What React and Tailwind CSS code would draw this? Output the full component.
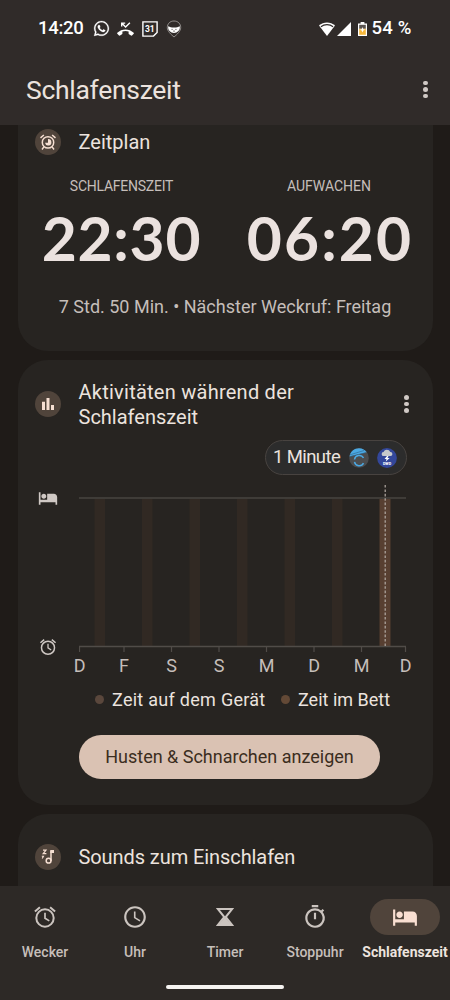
import { MdHotel, MdSchedule, MdOutlineTimer } from 'react-icons/md';
import { FaWhatsapp } from 'react-icons/fa';

function AlarmIcon({ className }) {
  return (
    <svg viewBox="0 0 24 24" className={className} fill="none" stroke="currentColor" strokeWidth="2">
      <circle cx="12" cy="13" r="8.700" />
      <path d="m1.900 6.400 5-4.200M22.100 6.400l-5-4.200" />
      <path d="M12 7.800v5.400l4.300 2.700" strokeWidth="1.700" />
    </svg>
  );
}

function Dots({ className }) {
  return (
    <div className={`flex flex-col items-center gap-[2px] ${className}`}>
      <i className="size-[4.600px] rounded-full bg-[#d0c9c5]" />
      <i className="size-[4.600px] rounded-full bg-[#d0c9c5]" />
      <i className="size-[4.600px] rounded-full bg-[#d0c9c5]" />
    </div>
  );
}

function Badge({ children }) {
  return (
    <span className="flex size-[26px] shrink-0 items-center justify-center rounded-full bg-[#50443b] text-[#f6dfd2]">
      {children}
    </span>
  );
}

function StatusBar() {
  return (
    <div className="flex h-14 items-center pt-px pl-[38px] pr-[38px] text-white">
      <span className="w-[55px] text-[18.500px] font-medium tracking-[-0.300px]">14:20</span>
      <FaWhatsapp className="size-[17px]" stroke="currentColor" strokeWidth="8" />
      <svg viewBox="0 0 17 14" className="ml-[7px] h-[14px] w-[17px]">
        <path d="M.3 10.800C4.800 6.300 12.200 6.300 16.700 10.800c.3.300.3.600 0 .9l-1.700 1.800c-.3.300-.7.300-1 .1l-2-1.400c-.3-.2-.4-.5-.4-.8V9.600c-2-.7-4.200-.7-6.200 0v1.800c0 .3-.1.600-.4.800l-2 1.400c-.3.200-.7.200-1-.1L.3 11.700c-.3-.3-.3-.6 0-.9z" fill="white" />
        <path d="M4.700 4.600V1.100h3.500M4.900 1.300 8.600 5l4.300-4.200" fill="none" stroke="white" strokeWidth="1.400" />
      </svg>
      <svg viewBox="0 0 16 16" className="ml-[8px] size-4" fill="none" stroke="white" strokeWidth="1.400">
        <path d="M.9 .9h14.200v10.500l-3.600 3.700H.9z" />
        <text x="7.800" y="11" fontSize="8.500" fontWeight="700" textAnchor="middle" fill="white" stroke="none">31</text>
      </svg>
      <svg viewBox="0 0 16 18" className="ml-2 h-[18px] w-4" fill="none">
        <path d="M8 1C4 1 1.300 3.800 1.300 7.500S5 14.500 8 17c3-2.500 6.700-5.800 6.700-9.500S12 1 8 1z" stroke="#aaa6a3" strokeWidth=".8" />
        <path d="M2.200 6.200c1.800.6 3 1.400 5.800 1.400s4-.8 5.800-1.400c.7 3.800-2.400 6.700-5.800 6.700S1.500 10 2.200 6.200z" fill="white" />
        <path d="M5.400 9.400h1.400M9.200 9.400h1.400M7 11.100h2" stroke="#504b48" strokeWidth=".7" />
      </svg>
      <svg viewBox="0 0 16 14" className="ml-auto h-[14px] w-4">
        <path d="M8 14 0 3.600C4.500-.7 11.500-.7 16 3.600z" fill="white" />
        <path d="M1.900 4.700c3.600-2.800 8.600-2.800 12.200 0" stroke="#302b29" strokeWidth="1.100" fill="none" />
      </svg>
      <svg viewBox="0 0 14 14" className="ml-[1.500px] size-[14px]">
        <path d="M14 0v14H0z" fill="white" />
      </svg>
      <svg viewBox="0 0 9 14" className="ml-[7px] h-[14px] w-[9px]">
        <path d="M2.600 0h3.800v1.400H9V14H0V1.400h2.600z" fill="white" />
        <path d="M1.200 2.800h6.600v4H1.200z" fill="#5a5450" />
        <path d="M1.200 6.800h6.600v6H1.200z" fill="#f5b63a" />
        <path d="M4.500 5 5.300 7.200l2 .6-2 .7-.8 2-.8-2-2-.7 2-.6z" fill="white" />
      </svg>
      <span className="ml-[5px] w-[40.500px] whitespace-nowrap text-[18.500px] font-medium tracking-[0.200px]">54 %</span>
    </div>
  );
}

function ScheduleCard() {
  return (
    <section className="mx-[17.500px] h-[226px] shrink-0 rounded-b-[30px] bg-[#272421]">
      <div className="flex h-[33px] items-center pl-[17.500px]">
        <Badge>
          <svg viewBox="0 0 24 24" className="size-[18px]" fill="none" stroke="currentColor" strokeWidth="2">
            <circle cx="12" cy="12.500" r="7.600" />
            <path d="m2 6.500 4.500-3.800M22 6.500l-4.500-3.800M6.500 18.500 4 22M17.500 18.500 20 22" />
            <path d="M12 8v5H8a4.300 4.300 0 1 0 4-5z" fill="currentColor" stroke="none" />
          </svg>
        </Badge>
        <h2 className="ml-[17.500px] text-[20px] text-[#ece3de]">Zeitplan</h2>
      </div>
      <div className="mt-[18.500px] flex h-5 items-center text-[14px] text-[#c5beba]">
        <span className="w-[208px] text-center tracking-[-0.250px]">SCHLAFENSZEIT</span>
        <span className="w-[207px] text-center">AUFWACHEN</span>
      </div>
      <div className="mt-[11.500px] flex h-[60px] font-['Lato',sans-serif] text-[60.500px] leading-none font-bold text-[#ebe2df]">
        <span className="w-[208px] text-center tracking-[0.700px] whitespace-nowrap">22:30</span>
        <span className="w-[207px] pl-[2px] text-center tracking-[2.100px] whitespace-nowrap">06:20</span>
      </div>
      <p className="mt-[29px] text-center text-[18px] leading-5 whitespace-nowrap text-[#c5beba]">
        7 Std. 50 Min. • Nächster Weckruf: Freitag
      </p>
    </section>
  );
}

const bars = [94.5, 142, 189.5, 237, 284.5, 332];
const ticks = [79.5, 124, 171.5, 219, 266.5, 314, 361.5, 405.5];

function Chart() {
  return (
    <div className="mt-[5px]">
      <div className="flex h-[172px] items-start">
        <div className="flex h-[176px] w-[61.500px] flex-col items-center justify-between pt-2 text-[#cfc8c4]">
          <MdHotel className="size-5" />
          <AlarmIcon className="size-[18px]" />
        </div>
        <svg viewBox="79 480 328 172" className="h-[172px] w-[328px]">
          {bars.map((x) => (
            <rect key={x} x={x} y="499" width="10.500" height="148" fill="#312923" />
          ))}
          <rect x="379.500" y="499" width="11" height="148" fill="#573f31" />
          <path d="M79 498h327" stroke="#484441" strokeWidth="1.500" />
          <path d="M79 646.500h327" stroke="#504c48" strokeWidth="1.300" />
          {ticks.map((x) => (
            <path key={x} d={`M${x} 647v5`} stroke="#504c48" strokeWidth="1.200" />
          ))}
          <path d="M385.200 485v161" stroke="#b3aaa4" strokeWidth="1.200" strokeDasharray="2.600 1.800" />
        </svg>
      </div>
      <div className="ml-[41.300px] grid h-6 grid-cols-[41.500px_repeat(6,47.500px)_40.500px] items-center text-center text-[18px] text-[#c5beba]">
        <span>D</span><span>F</span><span>S</span><span>S</span><span>M</span><span>D</span><span>M</span><span>D</span>
      </div>
    </div>
  );
}

function ActivityCard() {
  return (
    <section className="mx-[17.500px] mt-[9px] h-[445px] shrink-0 rounded-[30px] bg-[#272421] pt-[19px]">
      <div className="flex h-[50px] items-center pl-[17.500px]">
        <Badge>
          <svg viewBox="0 0 12 12" className="size-3" fill="currentColor">
            <path d="M0 3.800h3V12H0zM4.500 0h3v12h-3zM9 7h3v5H9z" />
          </svg>
        </Badge>
        <h2 className="ml-[17.500px] pt-px text-[20px] leading-[25px] text-[#ece3de]">
          <span className="tracking-[0.250px]">Aktivitäten während der</span>
          <br />
          Schlafenszeit
        </h2>
        <Dots className="mr-[24px] ml-auto" />
      </div>
      <div className="mt-[11px] mr-[26px] ml-auto flex h-[35px] w-[142px] items-center rounded-full border-[1.500px] border-[#484340] bg-[#2c2c2c] pl-[7.500px]">
        <span className="w-[76px] text-[18.500px] tracking-[-0.600px] whitespace-nowrap text-[#ebe3df]">1 Minute</span>
        <svg viewBox="0 0 20 20" className="size-5">
          <circle cx="10" cy="10" r="9.800" fill="#4b4c4e" />
          <path d="M.5 8.500C1 3.500 5.500.2 10 .2c3.500 0 6.200 1.800 7.700 4z" fill="#4ba9e4" />
          <path d="m1 6.800 14-4.300M.8 8.600 17 4.700" stroke="#2d6288" strokeWidth=".6" />
          <path d="M5.500 11.500a4.800 4.800 0 0 1 9-1.500M5.500 13.800a4.800 4.800 0 0 0 9 1.300" fill="none" stroke="#4ba9e4" strokeWidth="1.500" />
        </svg>
        <svg viewBox="0 0 20 20" className="ml-2 size-5">
          <circle cx="10" cy="10" r="9.900" fill="#33479a" />
          <path d="M6.800 8a2 2 0 0 1-.3-4A3.700 3.700 0 0 1 13.300 4a2 2 0 0 1 .2 4z" fill="#c8cacb" />
          <path d="m10 8-2.500 3h2l-.7 2.500L12.700 10h-2.200l1-2z" fill="white" />
          <text x="10" y="17.200" fontSize="3.800" fontWeight="800" textAnchor="middle" fill="white">DWD</text>
        </svg>
      </div>
      <Chart />
      <div className="mt-[13px] flex h-5 items-center pl-[77px] text-[18px] whitespace-nowrap text-[#ebe3df]">
        <i className="size-[9px] rounded-full bg-[#5a473c]" />
        <span className="ml-[8.500px] w-[168.500px] tracking-[0.280px]">Zeit auf dem Gerät</span>
        <i className="size-[9px] rounded-full bg-[#634936]" />
        <span className="ml-[8.500px]">Zeit im Bett</span>
      </div>
      <button className="mt-[25.500px] ml-[61.500px] h-11 w-[301px] rounded-full bg-[#dac2b3] pb-px text-[18px] whitespace-nowrap text-[#3b2d20]">
        Husten &amp; Schnarchen anzeigen
      </button>
    </section>
  );
}

function SoundsCard() {
  return (
    <section className="mx-[17.500px] mt-[9px] h-[120px] shrink-0 rounded-t-[30px] bg-[#272421]">
      <div className="flex h-[86px] items-center pl-[17.500px]">
        <Badge>
          <svg viewBox="0 0 14 16" className="h-4 w-[14px]" fill="none" stroke="currentColor" strokeWidth="1.500">
            <circle cx="7.600" cy="11.700" r="2.400" />
            <path d="M10 12V1.800" />
            <path d="M9.300 1H13v3H9.300z" fill="currentColor" stroke="none" />
            <path d="M2 1.200h3L2.200 4.700h3.200" strokeWidth="1.200" />
            <path d="M.8 7.300h1.700L1.200 9.600" strokeWidth="1.100" />
          </svg>
        </Badge>
        <h2 className="ml-[17.500px] text-[20px] tracking-[-0.080px] text-[#ece3de]">Sounds zum Einschlafen</h2>
      </div>
    </section>
  );
}

function NavItem({ label, active, children }) {
  return (
    <div className="flex w-[90px] flex-col items-center">
      <span className={`flex h-9 w-[70px] items-center justify-center rounded-full ${active ? 'bg-[#50443b] text-[#f9dfd2]' : 'text-[#cbc4bf]'}`}>
        {children}
      </span>
      <span className={`mt-[6.500px] text-[14px] leading-5 ${active ? 'font-bold text-[#ece3de]' : 'font-medium text-[#c6bfba]'}`}>{label}</span>
    </div>
  );
}

export default function App() {
  return (
    <div className="flex h-[1000px] w-[450px] flex-col overflow-hidden bg-[#1f1b18] font-['Roboto',sans-serif]">
      <header className="h-[125px] shrink-0 bg-[#302b29]">
        <StatusBar />
        <div className="flex h-[67px] items-center justify-between pr-[22px] pl-[26px]">
          <h1 className="text-[26.500px] tracking-[-0.300px] text-[#ebe2dd]">Schlafenszeit</h1>
          <Dots />
        </div>
      </header>
      <main className="flex h-[761px] shrink-0 flex-col overflow-hidden">
        <ScheduleCard />
        <ActivityCard />
        <SoundsCard />
      </main>
      <nav className="flex h-[114px] shrink-0 flex-col items-center bg-[#2d2926] pt-[13px]">
        <div className="flex">
          <NavItem label="Wecker"><AlarmIcon className="size-6" /></NavItem>
          <NavItem label="Uhr"><MdSchedule className="size-[26px]" /></NavItem>
          <NavItem label="Timer">
            <svg viewBox="0 0 18 18" className="size-[18px]" fill="none" stroke="currentColor" strokeWidth="2">
              <path d="M1.800 1h14.400L9.700 9l6.500 8H1.800l6.500-8z" />
              <path d="M9 9 15.500 17h-13z" fill="currentColor" stroke="none" />
            </svg>
          </NavItem>
          <NavItem label="Stoppuhr"><MdOutlineTimer className="size-[26px]" /></NavItem>
          <NavItem label="Schlafenszeit" active><MdHotel className="size-[26px]" /></NavItem>
        </div>
        <div className="mt-[23.500px] h-1 w-[118px] rounded-full bg-[#f5f3f1]" />
      </nav>
    </div>
  );
}
